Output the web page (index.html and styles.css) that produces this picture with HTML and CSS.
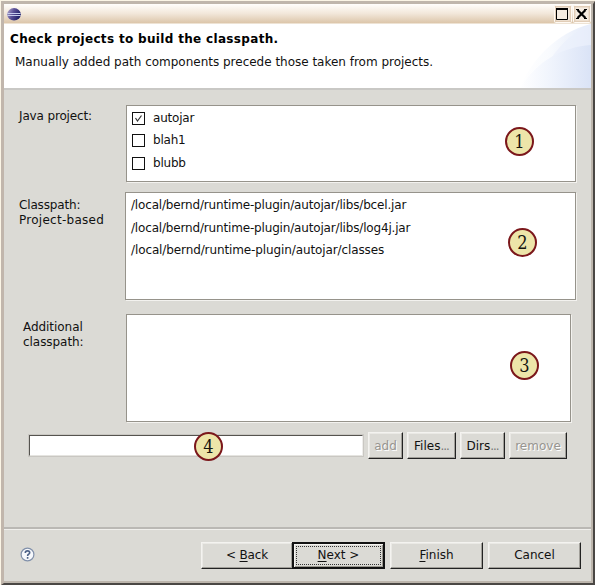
FILE: index.html
```html
<!DOCTYPE html>
<html lang="en">
<head>
<meta charset="utf-8">
<title>Classpath wizard</title>
<link rel="stylesheet" href="styles.css">
</head>
<body>
<div class="window">
  <div class="titlebar">
    <svg class="logo" width="14" height="13" viewBox="0 0 14 13">
      <defs><linearGradient id="ball" x1="0" y1="0" x2="1" y2=".4"><stop offset="0" stop-color="#b9aed2"/><stop offset=".5" stop-color="#5a5096"/><stop offset="1" stop-color="#20206a"/></linearGradient></defs>
      <ellipse cx="7" cy="6.3" rx="6.8" ry="6.2" fill="url(#ball)"/>
      <path d="M0.5 5.5h13M0.5 7.5h13" stroke="#c5cbed" stroke-width="1"/>
    </svg>
    <div class="winbtns">
      <svg width="18" height="19" viewBox="0 0 18 19"><rect x=".5" y="1.500" width="17" height="17" rx="1" class="wb-edge"/><rect x="2" y="3" width="14" height="14" class="wb-face"/><path d="M2.500 4.500h11v11h-11z" fill="none" stroke="#000"/><path d="M2 5h12" stroke="#000" stroke-width="2"/></svg>
      <svg width="18" height="19" viewBox="0 0 18 19"><rect x=".5" y="1.500" width="17" height="17" rx="1" class="wb-edge"/><rect x="2" y="3" width="14" height="14" class="wb-face"/><path d="M4.500 6l8 8M12.500 6l-8 8" stroke="#000" stroke-width="2.200"/><path d="M3 5.500h3M11 5.500h3M3 14.500h3M11 14.500h3" stroke="#000"/></svg>
    </div>
  </div>
  <div class="banner">
    <svg class="swoosh" width="71" height="64" viewBox="0 0 71 64">
      <defs>
        <linearGradient id="sw1"><stop offset="0" stop-color="#fff"/><stop offset=".4" stop-color="#f9fbfe"/><stop offset="1" stop-color="#e4ebf9"/></linearGradient>
        <linearGradient id="sw2"><stop offset="0" stop-color="#fff"/><stop offset=".4" stop-color="#f1f5fd"/><stop offset="1" stop-color="#dae3f6"/></linearGradient>
      </defs>
      <path d="M0 64C10 38 36 8 71 0V64z" fill="url(#sw1)"/>
      <path d="M30 36Q47 10 71 0V22Q49 24 30 36z" fill="#e9effb" opacity=".55"/>
      <path d="M0 64C18 36 43 23 71 21V64z" fill="url(#sw2)"/>
    </svg>
    <h1>Check projects to build the classpath.</h1>
    <p>Manually added path components precede those taken from projects.</p>
  </div>
  <div class="content">
    <div class="row row-projects">
      <div class="label tight">Java project:</div>
      <div class="box list">
        <div class="item"><svg class="check" width="13" height="13" viewBox="0 0 11 11"><path d="M2.500 5l2 3 4-5.500" fill="none" stroke="#333" stroke-width="1.200"/></svg>autojar</div>
        <div class="item"><span class="check"></span>blah1</div>
        <div class="item"><span class="check"></span>blubb</div>
        <span class="badge b1">1</span>
      </div>
    </div>
    <div class="row row-class">
      <div class="label"><span class="tight">Classpath:</span><br><span class="wide">Project-based</span></div>
      <div class="box list paths">
        <div class="item">/local/bernd/runtime-plugin/autojar/libs/bcel.jar</div>
        <div class="item">/local/bernd/runtime-plugin/autojar/libs/log4j.jar</div>
        <div class="item classes">/local/bernd/runtime-plugin/autojar/classes</div>
        <span class="badge b2">2</span>
      </div>
    </div>
    <div class="row row-extra">
      <div class="label">Additional<br>classpath:</div>
      <div class="box"><span class="badge b3">3</span></div>
    </div>
    <div class="entry">
      <div class="field"><span class="badge b4">4</span></div>
      <div class="btn off add">add</div>
      <div class="btn files">Files<span class="dots">...</span></div>
      <div class="btn dirs">Dirs<span class="dots">...</span></div>
      <div class="btn off remove">remove</div>
    </div>
  </div>
  <div class="footer">
    <svg class="help" width="15" height="15" viewBox="0 0 15 15"><circle cx="7.500" cy="7.500" r="6.400" fill="#f6f8fc" stroke="#8190aa" stroke-width="1.200"/><path d="M5.300 5.900Q5.300 3.900 7.500 3.900T9.700 5.700Q9.700 6.700 8.500 7.300Q7.600 7.800 7.600 9M7.600 10.100v1.600" fill="none" stroke="#4d6288" stroke-width="1.600"/></svg>
    <div class="btn nav back"><span>&lt; <u>B</u>ack</span></div>
    <div class="btn nav next"><span><u>N</u>ext &gt;</span></div>
    <div class="btn nav"><span><u>F</u>inish</span></div>
    <div class="btn nav"><span>Cancel</span></div>
  </div>
</div>
</body>
</html>
```
FILE: styles.css
```css
* { box-sizing: border-box; }
body { margin: 0; width: 595px; height: 585px; overflow: hidden; background: #fbf5e6; font: 12px/15px "DejaVu Sans", sans-serif; color: #111; }
.window { width: 594px; height: 584px; margin: 1px 0 0 1px; display: flex; flex-direction: column; background: #dbdad5; border-style: solid; border-width: 3px 2px 2px 3px; border-color: #bfb6ac #4a4744 #4a4744 #c1b6ac; box-shadow: inset -2px -2px #bdb6ad; }
.titlebar { height: 20px; flex: none; display: flex; justify-content: space-between; padding: 0 0 0 3px; background: linear-gradient(#fffefc, #f2e7da 50%, #dcc6aa); border-bottom: 1px solid #eee3d4; margin-right: 2px; }
.logo { margin-top: 4px; }
.winbtns { display: flex; gap: 1px; }
.wb-edge { fill: #dec9b1; stroke: #fffaf4; }
.wb-face { fill: #f5ece1; stroke: #e4d2bd; }
.banner { position: relative; height: 66px; flex: none; margin-right: 2px; background: #fff; border-bottom: 2px solid #c9c8c5; padding: 7px 0 0 6px; }
.swoosh { position: absolute; right: 0; top: 0; }
h1 { position: relative; margin: 0; font-size: 12px; line-height: 16px; font-weight: bold; letter-spacing: .33px; white-space: nowrap; color: #000; }
p { position: relative; margin: 7px 0 0 5px; line-height: 16px; white-space: nowrap; letter-spacing: -.01px; }
.content { height: 439px; flex: none; padding: 15px 0 0 14px; margin-right: 2px; border-bottom: 2px solid #bab8b4; }
.row { display: flex; }
.label { width: 108px; flex: none; padding: 4px 0 0 1px; }
.tight { letter-spacing: -.15px; }
.wide { letter-spacing: .27px; }
.box { position: relative; background: #fff; border: 1px solid #96938b; box-shadow: 1px 1px #f3f2ef; }
.row-projects .box { width: 450px; height: 77px; }
.row-class { margin-top: 10px; }
.row-class .label { width: 107px; padding-top: 6px; }
.row-class .box { width: 451px; height: 108px; }
.row-extra { margin-top: 14px; }
.row-extra .label { padding: 6px 0 0 5px; letter-spacing: -.05px; }
.row-extra .box { width: 445px; height: 108px; }
.list { padding: 1px 0 0 5px; }
.item { display: flex; align-items: center; height: 22.5px; white-space: nowrap; letter-spacing: -.2px; }
.check { width: 13px; height: 13px; margin-right: 8px; background: #fff; border: 1px solid #111; flex: none; }
.paths { padding-top: 1.3px; }
.paths .item { letter-spacing: -.168px; }
.paths .classes { letter-spacing: -.11px; }
.badge { position: absolute; width: 29px; height: 29px; border: 2px solid #7b171b; border-radius: 50%; background: #ede5a9; color: #151510; font: 18px/25px "DejaVu Serif Condensed", "DejaVu Serif", serif; font-stretch: condensed; text-align: center; }
.b1 { left: 378px; top: 21px; }
.b2 { left: 382px; top: 35px; }
.b3 { left: 383px; top: 36px; }
.b4 { left: 164px; top: -4px; }
.entry { display: flex; margin: 10px 0 0 10px; gap: 4px; }
.field { position: relative; width: 336px; height: 23px; margin-top: 2px; background: #fff; border: 2px solid; border-color: #55534f #eeedeb #e5e4e0 #55534f; outline: 1px solid #c9c7c2; outline-offset: -1px; }
.btn { display: flex; align-items: center; justify-content: center; height: 27px; white-space: nowrap; border: 1px solid; border-color: #f4f3f0 #222 #222 #f4f3f0; box-shadow: inset -1px -1px #a19f99, inset 1px 1px #eae9e5; background: #dbdad5; }
.entry .btn { padding-top: 1px; }
.off { color: #979590; text-shadow: 1px 1px #fff; }
.add { width: 35px; }
.files { width: 49px; }
.dirs { width: 45px; }
.remove { width: 58px; }
.dots { letter-spacing: -1px; color: #777; }
.footer { display: flex; padding: 12px 0 0 16px; border-top: 1px solid #f0efec; margin-right: 2px; }
.help { margin: 5px 166px 0 0; flex: none; }
.nav { width: 93px; height: 27px; flex: none; margin-right: 5px; }
.back { width: 92px; margin-right: -1px; letter-spacing: -.15px; }
.next { border: 2px solid #111; box-shadow: inset 1px 1px #f4f3f0, inset -1px -1px #99978f; padding: 2px; }
.next span { display: flex; align-items: center; justify-content: center; width: 100%; height: 100%; border: 1px dotted #333; white-space: pre; }
u { text-underline-offset: 2px; text-decoration-thickness: 1px; }
```
